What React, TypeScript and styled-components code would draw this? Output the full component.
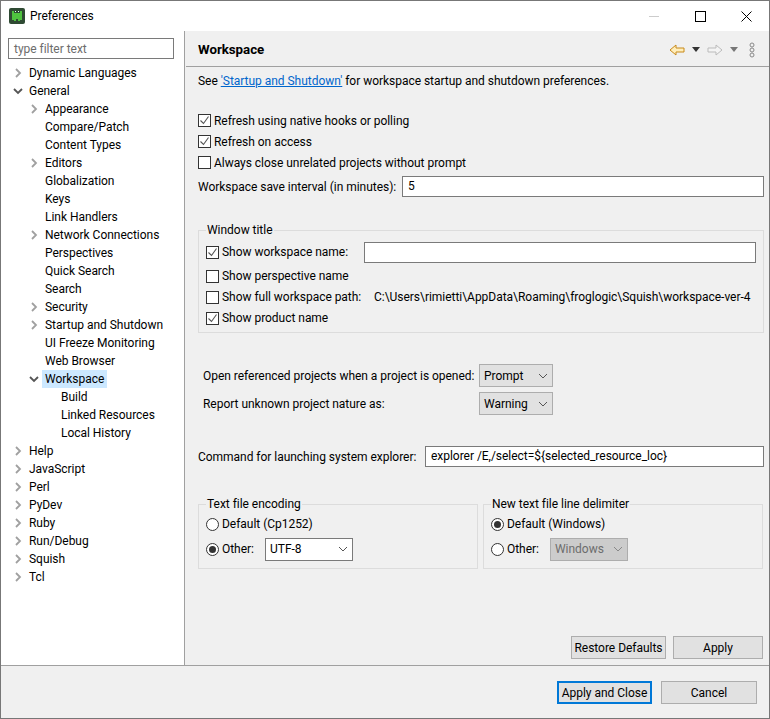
import React from 'react';
import styled, { createGlobalStyle } from 'styled-components';

const Global = createGlobalStyle`
  html, body { margin: 0; padding: 0; background: #fff; }
  body { font: 12px/16px Roboto, "Noto Sans", sans-serif; letter-spacing: -0.03px; color: #000; }
  * { box-sizing: border-box; }
`;

const Window = styled.div`
  width: 770px; height: 719px; border: 1px solid #777; display: flex; flex-direction: column; overflow: hidden; background: #f0f0f0;
`;
const TitleBar = styled.div`
  height: 30px; flex: none; background: #fff; display: flex; align-items: center; padding-left: 8px;
`;
const TitleText = styled.span`margin-left: 5px; flex: 1;`;
const WinBtn = styled.div`width: 46px; height: 30px; display: flex; align-items: center; justify-content: center;`;
const Main = styled.div`flex: 1; display: flex; min-height: 0; border-bottom: 1px solid #a0a0a0;`;
const Side = styled.div`
  width: 184px; flex: none; background: #fff; border-right: 1px solid #a0a0a0; padding: 7px 0 0 7px;
`;
const Filter = styled.div`
  width: 166px; height: 21px; border: 1px solid #7a7a7a; padding: 1px 0 0 5px; line-height: 19px; color: #6d6d6d; background: #fff; margin-bottom: 5px;
`;
const TreeRow = styled.div<{ $level: number }>`
  height: 18px; display: flex; align-items: center; padding-left: ${p => p.$level * 16 + 9}px; margin-left: -7px; white-space: nowrap;
`;
const Twist = styled.span`width: 16px; height: 18px; flex: none; display: flex; align-items: center; justify-content: center;`;
const TreeLabel = styled.span<{ $sel?: boolean }>`
  padding: 0 3px; height: 18px; line-height: 18px; background: ${p => (p.$sel ? '#cce8ff' : 'transparent')};
`;
const Panel = styled.div`flex: 1; min-width: 0; display: flex; flex-direction: column; padding-left: 1px;`;
const Header = styled.div`
  height: 36px; flex: none; border-bottom: 1px solid #a0a0a0; display: flex; align-items: center; padding-left: 12px;
`;
const Heading = styled.h1`margin: 3px 0 0; flex: 1; font-size: 13.3px; font-weight: 700;`;
const Tools = styled.div`display: flex; align-items: center; padding: 2px 14px 0 0;`;
const Body = styled.div`flex: 1; padding: 6px 5px 0 12px; display: flex; flex-direction: column; min-height: 0;`;
const Line = styled.div`height: 16px; line-height: 16px; white-space: nowrap;`;
const Link = styled.a`color: #0066cc; text-decoration: underline;`;
const Checks = styled.div`margin-top: 21px; display: flex; flex-direction: column;`;
const CheckRow = styled.div<{ $h?: number }>`height: ${p => p.$h ?? 21}px; display: flex; align-items: center; white-space: nowrap;`;
const Box = styled.span`
  width: 13px; height: 13px; border: 1px solid #333; background: #fff; flex: none; margin-right: 3px; display: flex;
`;
const Radio = styled.span<{ $on?: boolean }>`
  width: 13px; height: 13px; border: 1px solid #333; border-radius: 50%; background: #fff; flex: none; margin-right: 3px; display: flex; align-items: center; justify-content: center;
  &::after { content: ""; width: 7px; height: 7px; border-radius: 50%; background: ${p => (p.$on ? '#333' : 'transparent')}; }
`;
const FieldRow = styled.div<{ $mt: number }>`display: flex; align-items: center; height: 21px; margin-top: ${p => p.$mt}px; white-space: nowrap;`;
const Input = styled.div`
  flex: 1; height: 21px; border: 1px solid #7a7a7a; background: #fff; padding-left: 5px; line-height: 19px; white-space: nowrap;
`;
const Group = styled.fieldset`
  margin: 0; padding: 0 7px; border: 1px solid #dcdcdc; min-width: 0;
  legend { padding: 0 1px; line-height: 16px; }
`;
const WindowGroup = styled(Group)`margin-top: 25px; height: 111px; padding-top: 2px;`;
const Select = styled.div<{ $w: number; $mode?: 'white' | 'off' }>`
  width: ${p => p.$w}px; height: 23px; flex: none; display: flex; align-items: center; justify-content: space-between; padding: 0 4px;
  border: 1px solid ${p => (p.$mode === 'white' ? '#7a7a7a' : '#adadad')};
  background: ${p => (p.$mode === 'white' ? '#fff' : p.$mode === 'off' ? '#ccc' : '#e1e1e1')};
  color: ${p => (p.$mode === 'off' ? '#6d6d6d' : '#000')};
`;
const ProjRow = styled.div<{ $mt: number }>`display: flex; align-items: center; height: 23px; margin-top: ${p => p.$mt}px; padding-left: 5px; white-space: nowrap;`;
const ProjLabel = styled.span`width: 276px; flex: none;`;
const GroupPair = styled.div`display: flex; gap: 5px; margin-top: 29px;`;
const HalfGroup = styled(Group)`width: 280px; height: 73px;`;
const Spacer = styled.div`flex: 1;`;
const Actions = styled.div`display: flex; justify-content: flex-end; gap: 7px; padding: 0 1px 6px 0;`;
const Button = styled.div<{ $w: number; $def?: boolean }>`
  width: ${p => p.$w}px; height: 23px; display: flex; align-items: center; justify-content: center; background: #e1e1e1; white-space: nowrap;
  border: ${p => (p.$def ? '2px solid #0078d7' : '1px solid #adadad')};
`;
const Footer = styled.div`height: 52px; flex: none; display: flex; justify-content: flex-end; gap: 9px; padding: 15px 12px 0 0;`;
const LabelGap = styled.span<{ $w: number }>`width: ${p => p.$w}px; flex: none;`;

const Chev = ({ open }: { open?: boolean }) => (
  <svg width="10" height="10" viewBox="0 0 10 10">
    {open
      ? <path d="M1 3l4 4 4-4" fill="none" stroke="#555" strokeWidth="1.8" />
      : <path d="M3 1l4 4-4 4" fill="none" stroke="#a0a0a0" strokeWidth="1.8" />}
  </svg>
);
const Check = () => (
  <svg width="11" height="11" viewBox="0 0 11 11"><path d="M1.5 5.5l3 3 5-7" fill="none" stroke="#555" strokeWidth="1.1" /></svg>
);
const Caret = ({ c = '#555' }: { c?: string }) => (
  <svg width="10" height="6" viewBox="0 0 10 6"><path d="M1 1l4 4 4-4" fill="none" stroke={c} strokeWidth="1" /></svg>
);
const Tri = ({ c }: { c: string }) => (
  <svg width="8" height="5" viewBox="0 0 8 5"><path d="M0 0h8L4 5z" fill={c} /></svg>
);

const tree: [string, number, 'c' | 'o' | 'n', boolean?][] = [
  ['Dynamic Languages', 0, 'c'], ['General', 0, 'o'], ['Appearance', 1, 'c'], ['Compare/Patch', 1, 'n'],
  ['Content Types', 1, 'n'], ['Editors', 1, 'c'], ['Globalization', 1, 'n'], ['Keys', 1, 'n'],
  ['Link Handlers', 1, 'n'], ['Network Connections', 1, 'c'], ['Perspectives', 1, 'n'], ['Quick Search', 1, 'n'],
  ['Search', 1, 'n'], ['Security', 1, 'c'], ['Startup and Shutdown', 1, 'c'], ['UI Freeze Monitoring', 1, 'n'],
  ['Web Browser', 1, 'n'], ['Workspace', 1, 'o', true], ['Build', 2, 'n'], ['Linked Resources', 2, 'n'],
  ['Local History', 2, 'n'], ['Help', 0, 'c'], ['JavaScript', 0, 'c'], ['Perl', 0, 'c'], ['PyDev', 0, 'c'],
  ['Ruby', 0, 'c'], ['Run/Debug', 0, 'c'], ['Squish', 0, 'c'], ['Tcl', 0, 'c'],
];

const CB = ({ on }: { on?: boolean }) => <Box>{on && <Check />}</Box>;

export default function App() {
  return (
    <Window>
      <Global />
      <TitleBar>
        <svg width="16" height="16" viewBox="0 0 16 16">
          <rect width="16" height="16" rx="2" fill="#2f4a33" />
          <path d="M3 3h2v2h6V3h2v9h-2v1H9v-2H7v2H5v-1H3z" fill="#4fc23f" />
          <rect x="6" y="3" width="1" height="1" fill="#dfe" /><rect x="9" y="3" width="1" height="1" fill="#dfe" />
        </svg>
        <TitleText>Preferences</TitleText>
        <WinBtn><svg width="10" height="10" viewBox="0 0 10 10"><path d="M0 5.5h10" stroke="#ccc" /></svg></WinBtn>
        <WinBtn><svg width="11" height="11" viewBox="0 0 11 11"><rect x=".5" y=".5" width="10" height="10" fill="none" stroke="#000" /></svg></WinBtn>
        <WinBtn><svg width="11" height="11" viewBox="0 0 11 11"><path d="M.5.5l10 10M10.5.5l-10 10" stroke="#000" /></svg></WinBtn>
      </TitleBar>
      <Main>
        <Side>
          <Filter>type filter text</Filter>
          {tree.map(([label, level, kind, sel]) => (
            <TreeRow key={label} $level={level}>
              <Twist>{kind === 'c' ? <Chev /> : kind === 'o' ? <Chev open /> : null}</Twist>
              <TreeLabel $sel={sel}>{label}</TreeLabel>
            </TreeRow>
          ))}
        </Side>
        <Panel>
          <Header>
            <Heading>Workspace</Heading>
            <Tools>
              <svg width="16" height="14" viewBox="0 0 16 14"><path d="M1 7l6-5v3h8v4H7v3z" fill="#ffeebb" stroke="#c88a1a" /></svg>
              <LabelGap $w={7} /><Tri c="#333" /><LabelGap $w={7} />
              <svg width="16" height="14" viewBox="0 0 16 14"><path d="M15 7L9 2v3H1v4h8v3z" fill="#f4f4f4" stroke="#bbb" /></svg>
              <LabelGap $w={7} /><Tri c="#777" /><LabelGap $w={11} />
              <svg width="6" height="16" viewBox="0 0 6 16">
                <circle cx="3" cy="3" r="2" fill="none" stroke="#888" /><circle cx="3" cy="8" r="2" fill="none" stroke="#888" /><circle cx="3" cy="13" r="2" fill="none" stroke="#888" />
              </svg>
            </Tools>
          </Header>
          <Body>
            <Line>See <Link>'Startup and Shutdown'</Link> for workspace startup and shutdown preferences.</Line>
            <Checks>
              <CheckRow><CB on />Refresh using native hooks or polling</CheckRow>
              <CheckRow><CB on />Refresh on access</CheckRow>
              <CheckRow><CB />Always close unrelated projects without prompt</CheckRow>
            </Checks>
            <FieldRow $mt={3}>
              <LabelGap $w={204}>Workspace save interval (in minutes):</LabelGap>
              <Input>5</Input>
            </FieldRow>
            <WindowGroup>
              <legend>Window title</legend>
              <CheckRow $h={24}><CB on /><LabelGap $w={142}>Show workspace name:</LabelGap><Input /></CheckRow>
              <CheckRow $h={24}><CB />Show perspective name</CheckRow>
              <CheckRow $h={18}><CB /><LabelGap $w={152}>Show full workspace path:</LabelGap>C:\Users\rimietti\AppData\Roaming\froglogic\Squish\workspace-ver-4</CheckRow>
              <CheckRow $h={24}><CB on />Show product name</CheckRow>
            </WindowGroup>
            <ProjRow $mt={31}>
              <ProjLabel>Open referenced projects when a project is opened:</ProjLabel>
              <Select $w={74}>Prompt<Caret /></Select>
            </ProjRow>
            <ProjRow $mt={5}>
              <ProjLabel>Report unknown project nature as:</ProjLabel>
              <Select $w={74}>Warning<Caret /></Select>
            </ProjRow>
            <FieldRow $mt={31}>
              <LabelGap $w={227}>Command for launching system explorer:</LabelGap>
              <Input>explorer /E,/select=${'{'}selected_resource_loc{'}'}</Input>
            </FieldRow>
            <GroupPair>
              <HalfGroup>
                <legend>Text file encoding</legend>
                <CheckRow $h={24}><Radio />Default (Cp1252)</CheckRow>
                <CheckRow $h={26}><Radio $on /><LabelGap $w={43}>Other:</LabelGap><Select $w={88} $mode="white">UTF-8<Caret /></Select></CheckRow>
              </HalfGroup>
              <HalfGroup>
                <legend>New text file line delimiter</legend>
                <CheckRow $h={24}><Radio $on />Default (Windows)</CheckRow>
                <CheckRow $h={26}><Radio /><LabelGap $w={43}>Other:</LabelGap><Select $w={78} $mode="off">Windows<Caret c="#888" /></Select></CheckRow>
              </HalfGroup>
            </GroupPair>
            <Spacer />
            <Actions>
              <Button $w={95}>Restore Defaults</Button>
              <Button $w={90}>Apply</Button>
            </Actions>
          </Body>
        </Panel>
      </Main>
      <Footer>
        <Button $w={95} $def>Apply and Close</Button>
        <Button $w={96}>Cancel</Button>
      </Footer>
    </Window>
  );
}
